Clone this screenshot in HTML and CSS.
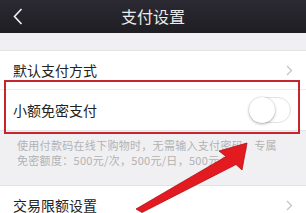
FILE: index.html
```html
<!DOCTYPE html>
<html>
<head>
<meta charset="utf-8">
<link rel="stylesheet" href="styles.css">
</head>
<body>
<div class="page">
  <header class="nav">
    <svg class="back" width="10" height="17" viewBox="0 0 10 17"><polyline points="8.5,1 1.5,8.5 8.5,16" fill="none" stroke="#f2f2f2" stroke-width="1.6"/></svg>
    <div class="title">支付设置</div>
  </header>
  <div class="gap"></div>
  <div class="group">
    <div class="row">
      <span class="label">默认支付方式</span>
      <svg class="chev" width="7" height="11" viewBox="0 0 7 11"><polyline points="1,1 5.5,5.5 1,10" fill="none" stroke="#c4c4c8" stroke-width="1.3"/></svg>
    </div>
    <div class="row last">
      <span class="label">小额免密支付</span>
      <div class="toggle"><div class="knob"></div></div>
    </div>
  </div>
  <div class="desc">使用付款码在线下购物时，无需输入支付密码，专属<br>免密额度：500元/次，500元/日，500元/月</div>
  <div class="group">
    <div class="row">
      <span class="label">交易限额设置</span>
      <svg class="chev" width="7" height="11" viewBox="0 0 7 11"><polyline points="1,1 5.5,5.5 1,10" fill="none" stroke="#c4c4c8" stroke-width="1.3"/></svg>
    </div>
  </div>
  <div class="highlight"></div>
  <svg class="arrow" width="306" height="213" viewBox="0 0 306 213">
    <polygon points="136,209 226,156.5 219,151 247,143 242,170 236,164.5 142,212.5" fill="#e31a1f" stroke="#b01016" stroke-width="0.8" stroke-linejoin="round"/>
  </svg>
</div>
</body>
</html>
```
FILE: styles.css
```css
* { box-sizing: border-box; }
html, body { margin: 0; padding: 0; }
body {
  font-family: "Noto Sans CJK SC", "Noto Sans", sans-serif;
  background: #f0f0f3;
  overflow: hidden;
}
.page {
  position: relative;
  width: 306px;
  height: 213px;
  overflow: hidden;
  background: #f0f0f3;
}
.nav {
  height: 33px;
  background: linear-gradient(#2b2a32, #1f1e25);
  display: flex;
  align-items: center;
  justify-content: center;
  position: relative;
}
.back {
  position: absolute;
  left: 13px;
  top: 8px;
}
.title {
  color: #ebebeb;
  font-size: 16px;
  line-height: 33px;
}
.gap { height: 17px; }
.group {
  background: #fff;
  border-top: 1px solid #e4e4e6;
  border-bottom: 1px solid #e4e4e6;
}
.row {
  height: 39px;
  display: flex;
  align-items: center;
  justify-content: space-between;
  padding: 0 13px 0 13px;
  border-bottom: 1px solid #ebebed;
}
.row.last { height: 40px; border-bottom: none; }
.label {
  font-size: 14px;
  line-height: 16px;
  color: #222;
}
.toggle {
  width: 42px;
  height: 26px;
  border-radius: 13px;
  border: 1px solid #e2e2e2;
  background: #fff;
  margin-right: 2px;
  position: relative;
}
.knob {
  position: absolute;
  left: -1px;
  top: -1px;
  width: 26px;
  height: 26px;
  border-radius: 50%;
  background: #fff;
  box-shadow: 0 1px 3px rgba(0,0,0,0.3), 0 0 0 0.5px rgba(0,0,0,0.08);
}
.desc {
  padding: 7px 12px 17px 17px;
  font-size: 11px;
  line-height: 15px;
  letter-spacing: 0.3px;
  color: #b2b2b2;
  white-space: nowrap;
}
.highlight {
  position: absolute;
  left: 4px;
  top: 80px;
  width: 296px;
  height: 54px;
  border: 2.5px solid #c5252d;
}
.arrow {
  position: absolute;
  left: 0;
  top: 0;
  pointer-events: none;
}
```
